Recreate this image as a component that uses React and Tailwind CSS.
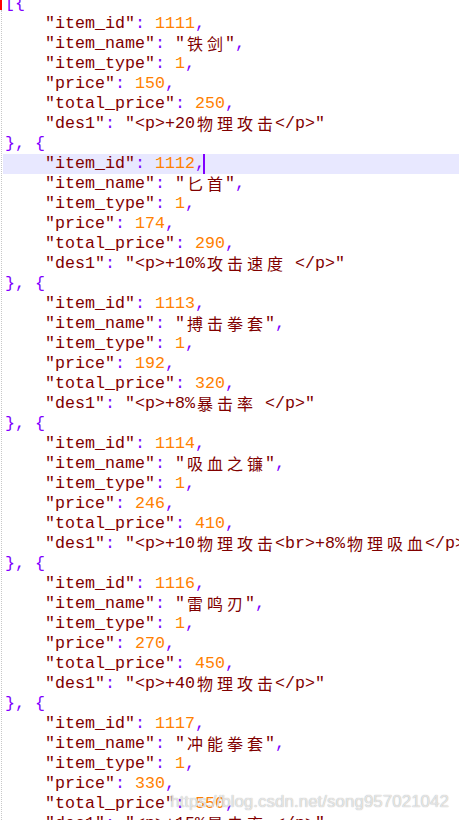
const items = [
  { id: 1111, name: '铁剑', type: 1, price: 150, total: 250, des: '<p>+20物理攻击</p>' },
  { id: 1112, name: '匕首', type: 1, price: 174, total: 290, des: '<p>+10%攻击速度 </p>' },
  { id: 1113, name: '搏击拳套', type: 1, price: 192, total: 320, des: '<p>+8%暴击率 </p>' },
  { id: 1114, name: '吸血之镰', type: 1, price: 246, total: 410, des: '<p>+10物理攻击<br>+8%物理吸血</p>' },
  { id: 1116, name: '雷鸣刃', type: 1, price: 270, total: 450, des: '<p>+40物理攻击</p>' },
  { id: 1117, name: '冲能拳套', type: 1, price: 330, total: 550, des: '<p>+15%暴击率 </p>' },
];

// CJK glyphs take two columns in the editor
const Txt = ({ text }) =>
  text.split('').map((ch, i) =>
    ch.charCodeAt(0) > 0x2e80 ? (
      <span
        key={i}
        className="inline-block w-[20px] h-[20px] leading-[19px] align-top text-center font-['Noto_Sans_CJK_SC',sans-serif] text-[16px]"
      >
        {ch}
      </span>
    ) : (
      ch
    )
  );

const P = ({ children }) => <span className="text-[#8000ff]">{children}</span>;
const S = ({ children }) => (
  <span className="text-[#800000]">
    "<Txt text={children} />"
  </span>
);
const N = ({ children }) => <span className="text-[#ff8000]">{children}</span>;

const Row = ({ children, active }) => (
  <div className={`h-[20px] leading-[20px] whitespace-pre overflow-hidden pl-[2px] ${active ? 'bg-[#e8e8ff]' : ''}`}>{children}</div>
);

const Field = ({ k, children, last, caret }) => (
  <Row active={caret}>
    {'    '}
    <S>{k}</S>
    <P>: </P>
    {children}
    {!last && <P>,</P>}
    {caret && <span className="inline-block w-[2px] h-[20px] align-top -ml-[2px] bg-[#8000ff]" />}
  </Row>
);

export default function App() {
  return (
    <div className="relative w-[459px] h-[820px] overflow-hidden bg-white flex font-['Liberation_Mono',monospace] text-[16.667px]">
      <div className="w-[3px] shrink-0 flex flex-col">
        <div className="h-[10px] w-[2px] bg-[#ff0000]" />
        <div className="flex-1 w-[1px] ml-[1px] border-l border-dotted border-[#c8c8c8]" />
      </div>
      <div className="flex-1 min-w-0 -mt-[6px]">
        <Row>
          <P>[{'{'}</P>
        </Row>
        {items.map((it, i) => (
          <div key={it.id}>
            <Field k="item_id" caret={i === 1}>
              <N>{it.id}</N>
            </Field>
            <Field k="item_name">
              <S>{it.name}</S>
            </Field>
            <Field k="item_type">
              <N>{it.type}</N>
            </Field>
            <Field k="price">
              <N>{it.price}</N>
            </Field>
            <Field k="total_price">
              <N>{it.total}</N>
            </Field>
            <Field k="des1" last>
              <S>{it.des}</S>
            </Field>
            {i < items.length - 1 && (
              <Row>
                <P>{'}, {'}</P>
              </Row>
            )}
          </div>
        ))}
      </div>
      <div className="absolute right-[10px] top-[790px] font-['Liberation_Sans',sans-serif] text-[17px] leading-[24px] text-white/70 [text-shadow:0_0_1px_#9a9a9a]">
        https://blog.csdn.net/song957021042
      </div>
    </div>
  );
}
